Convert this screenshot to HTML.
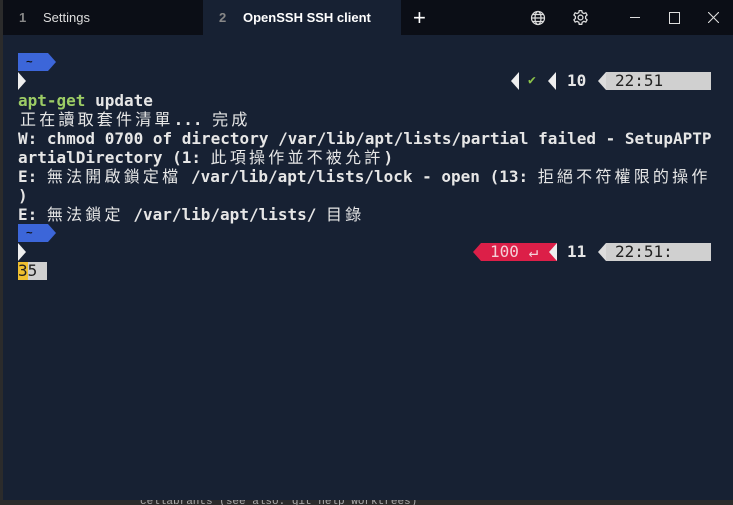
<html><head><style>
body{margin:0;width:733px;height:505px;background:#2b2b2b;overflow:hidden;position:relative;font-family:"DejaVu Sans Mono","Noto Sans CJK TC",monospace}
#win{position:absolute;left:3px;top:0;width:730px;height:500px;background:#172133}
#bar{position:absolute;left:0;top:0;width:730px;height:35px;background:#0b0e16}
.tab{position:absolute;top:0;height:35px;font:13px "Liberation Sans",sans-serif;color:#fff;line-height:35px}
.r{position:absolute;left:15px;height:19px;line-height:19px;font-size:16px;color:#e6e6e6;white-space:pre;font-weight:bold}
.c{letter-spacing:3.2px;font-weight:normal}
.abs{position:absolute}
</style></head><body>
<div id="win">
<div id="bar">
<div class="tab" style="left:0;width:198px"><span style="position:absolute;left:16px;color:#888;font-weight:bold">1</span><span style="position:absolute;left:40px;color:#ddd">Settings</span></div>
<div class="tab" style="left:200px;width:198px;background:#172133"><span style="position:absolute;left:16px;color:#888;font-weight:bold">2</span><span style="position:absolute;left:40px;font-weight:bold">OpenSSH SSH client</span></div>
<div class="tab" style="left:410px;font-size:22px;font-weight:300">+</div>
<svg class="abs" style="left:527px;top:10px" width="16" height="16" viewBox="0 0 16 16" fill="none" stroke="#ddd" stroke-width="1.2"><circle cx="8" cy="8" r="6.5"/><ellipse cx="8" cy="8" rx="3" ry="6.5"/><path d="M1.5 8h13M2.5 4.5h11M2.5 11.5h11"/></svg>
<svg class="abs" style="left:569px;top:9px" width="17" height="17" viewBox="0 0 16 16" fill="none" stroke="#ddd" stroke-width="1.2"><circle cx="8" cy="8" r="2.3"/><path d="M6.8 1.5h2.4l.4 1.9 1.6.9 1.8-.7 1.2 2.1-1.4 1.3v1.9l1.4 1.3-1.2 2.1-1.8-.7-1.6.9-.4 1.9H6.8l-.4-1.9-1.6-.9-1.8.7-1.2-2.1 1.4-1.3V7L1.8 5.7 3 3.6l1.8.7 1.6-.9z"/></svg>
<div class="abs" style="left:627px;top:17px;width:10px;height:1px;background:#ddd"></div>
<div class="abs" style="left:666px;top:12px;width:9px;height:10px;border:1px solid #ddd"></div>
<svg class="abs" style="left:705px;top:12px" width="11" height="11" stroke="#ddd" stroke-width="1.1"><path d="M0 0L11 11M11 0L0 11"/></svg>
</div>

<div class="abs" style="left:15px;top:53px;width:30px;height:18px;background:#3c66d9"></div>
<div class="abs" style="left:45px;top:53px;border-left:8px solid #3c66d9;border-top:9px solid transparent;border-bottom:9px solid transparent"></div>
<div class="r" style="top:52px;left:23px;font-size:11px;color:#111">~</div>
<div class="abs" style="left:15px;top:72px;border-left:8px solid #eee;border-top:9px solid transparent;border-bottom:9px solid transparent"></div>

<div class="abs" style="left:508px;top:72px;border-right:8px solid #eee;border-top:9px solid transparent;border-bottom:9px solid transparent"></div>
<div class="r" style="top:71px;left:525px;color:#8bc34a;font-size:13px">✔</div>
<div class="abs" style="left:545px;top:72px;border-right:8px solid #eee;border-top:9px solid transparent;border-bottom:9px solid transparent"></div>
<div class="r" style="top:71px;left:564px;font-weight:bold">10</div>
<div class="abs" style="left:595px;top:72px;border-right:8px solid #ddd;border-top:9px solid transparent;border-bottom:9px solid transparent"></div>
<div class="abs" style="left:603px;top:72px;width:105px;height:18px;background:#d0d0d0"></div>
<div class="r" style="top:71px;left:612px;color:#222;font-weight:normal">22:51</div>

<div class="r" style="top:91px"><span style="color:#9ccc65">apt-get</span> update</div>
<div class="r" style="top:110px;left:17px"><span class="c">正在讀取套件清單</span>... <span class="c">完成</span></div>
<div class="r" style="top:129px">W: chmod 0700 of directory /var/lib/apt/lists/partial failed - SetupAPTP</div>
<div class="r" style="top:148px">artialDirectory (1: <span class="c">此項操作並不被允許</span>)</div>
<div class="r" style="top:167px">E: <span class="c">無法開啟鎖定檔</span> /var/lib/apt/lists/lock - open (13: <span class="c">拒絕不符權限的操作</span></div>
<div class="r" style="top:186px">)</div>
<div class="r" style="top:205px">E: <span class="c">無法鎖定</span> /var/lib/apt/lists/ <span class="c">目錄</span></div>

<div class="abs" style="left:15px;top:224px;width:30px;height:18px;background:#3c66d9"></div>
<div class="abs" style="left:45px;top:224px;border-left:8px solid #3c66d9;border-top:9px solid transparent;border-bottom:9px solid transparent"></div>
<div class="r" style="top:223px;left:23px;font-size:11px;color:#111">~</div>
<div class="abs" style="left:15px;top:243px;border-left:8px solid #eee;border-top:9px solid transparent;border-bottom:9px solid transparent"></div>

<div class="abs" style="left:470px;top:243px;border-right:8px solid #dc1f48;border-top:9px solid transparent;border-bottom:9px solid transparent"></div>
<div class="abs" style="left:478px;top:243px;width:76px;height:18px;background:#dc1f48"></div>
<div class="r" style="top:242px;left:487px;color:#f4d0d8;font-weight:normal">100 ↵</div>
<div class="abs" style="left:546px;top:243px;border-right:8px solid #eee;border-top:9px solid transparent;border-bottom:9px solid transparent"></div>
<div class="r" style="top:242px;left:564px;font-weight:bold">11</div>
<div class="abs" style="left:595px;top:243px;border-right:8px solid #ddd;border-top:9px solid transparent;border-bottom:9px solid transparent"></div>
<div class="abs" style="left:603px;top:243px;width:105px;height:18px;background:#d0d0d0"></div>
<div class="r" style="top:242px;left:612px;color:#222;font-weight:normal">22:51:</div>

<div class="abs" style="left:15px;top:262px;width:29px;height:18px;background:#d0d0d0"></div>
<div class="abs" style="left:15px;top:262px;width:10px;height:18px;background:#f0c030"></div>
<div class="r" style="top:261px;color:#222;font-weight:normal">35</div>
</div>
<div class="abs" style="left:140px;top:500px;font-size:11px;color:#aaa;font-family:'Liberation Mono';line-height:5px;overflow:hidden;height:5px">cellabrants (see also: git help worktrees)</div>
</body></html>
